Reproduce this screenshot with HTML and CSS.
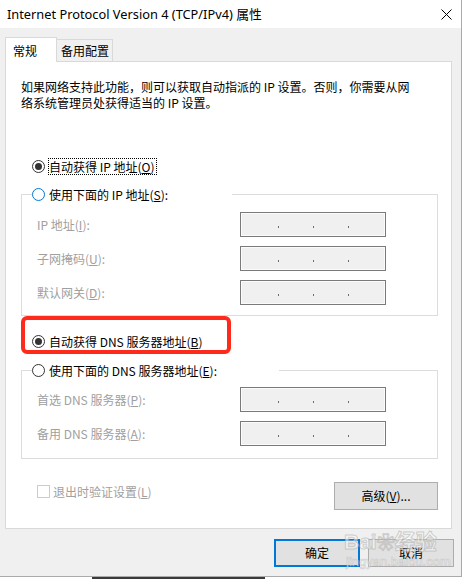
FILE: index.html
```html
<!DOCTYPE html>
<html lang="zh-CN">
<head>
<meta charset="utf-8">
<title>Internet Protocol Version 4 (TCP/IPv4) 属性</title>
<link rel="stylesheet" href="styles.css">
</head>
<body>
<div class="window">
  <div class="titlebar">
    <span class="title">Internet Protocol Version 4 (TCP/IPv4) 属性</span>
    <svg class="close" width="11" height="11" viewBox="0 0 11 11"><path d="M0.5 0.5L10.5 10.5M10.5 0.5L0.5 10.5" stroke="#000" stroke-width="1" fill="none"/></svg>
  </div>
  <div class="tabs">
    <div class="tab active">常规</div>
    <div class="tab">备用配置</div>
  </div>
  <div class="panel">
    <p class="intro">如果网络支持此功能，则可以获取自动指派的 IP 设置。否则，你需要从网<br>络系统管理员处获得适当的 IP 设置。</p>
    <div class="radio-row first"><span class="radio checked"></span><span class="focus">自动获得 IP 地址(<u>O</u>)</span></div>
    <fieldset class="group g1">
      <legend class="legend l1"><span class="radio hover"></span><span>使用下面的 IP 地址(<u>S</u>):</span></legend>
      <div class="field"><span class="flabel">IP 地址(<u>I</u>):</span><span class="ip"><i></i><i></i><i></i></span></div>
      <div class="field"><span class="flabel">子网掩码(<u>U</u>):</span><span class="ip"><i></i><i></i><i></i></span></div>
      <div class="field"><span class="flabel">默认网关(<u>D</u>):</span><span class="ip"><i></i><i></i><i></i></span></div>
    </fieldset>
    <div class="highlight">
      <div class="radio-row"><span class="radio checked"></span><span>自动获得 DNS 服务器地址(<u>B</u>)</span></div>
    </div>
    <fieldset class="group g2">
      <legend class="legend l2"><span class="radio"></span><span>使用下面的 DNS 服务器地址(<u>E</u>):</span></legend>
      <div class="field"><span class="flabel">首选 DNS 服务器(<u>P</u>):</span><span class="ip"><i></i><i></i><i></i></span></div>
      <div class="field"><span class="flabel">备用 DNS 服务器(<u>A</u>):</span><span class="ip"><i></i><i></i><i></i></span></div>
    </fieldset>
    <div class="bottom-row">
      <span class="check"><span class="box"></span>退出时验证设置(<u>L</u>)</span>
      <button class="btn adv">高级(<u>V</u>)...</button>
    </div>
  </div>
  <div class="actions">
    <button class="btn ok">确定</button>
    <button class="btn">取消</button>
  </div>
  <div class="watermark">
    <span class="wm-big">Bai<span class="paw">❀</span>经验</span>
    <span class="wm-small">jingyan.baidu.com</span>
  </div>
</div>
<div class="below"></div>
</body>
</html>
```
FILE: styles.css
```css
* { box-sizing: border-box; }
html, body { margin: 0; padding: 0; background: #fff; }
body {
  font-family: "Noto Sans CJK SC", "Noto Sans", sans-serif;
  font-size: 12px;
  color: #000;
}
u { text-decoration: underline; text-underline-offset: 1px; }

.window {
  position: relative;
  width: 462px;
  height: 577px;
  background: #f0f0f0;
  border-right: 1px solid #aaaaaa;
  border-bottom: 1px solid #aaaaaa;
}

.titlebar {
  height: 28px;
  background: #fff;
  display: flex;
  align-items: center;
  justify-content: space-between;
  padding: 0 9px 0 7px;
}
.title {
  font-family: "Noto Sans", "Noto Sans CJK SC", sans-serif;
  font-size: 12.8px;
  line-height: 16px;
}
.close { display: block; }

.tabs {
  height: 33px;
  display: flex;
  align-items: flex-end;
  padding-left: 5px;
}
.tab {
  height: 22px;
  width: 56px;
  border: 1px solid #d9d9d9;
  border-left: none;
  border-bottom: none;
  background: #f0f0f0;
  padding: 2px 0 0 4px;
  line-height: 18px;
}
.tab.active {
  position: relative;
  z-index: 1;
  width: 52px;
  height: 25px;
  margin-bottom: -1px;
  border-left: 1px solid #d9d9d9;
  background: #fff;
  padding: 4px 0 0 7px;
}

.panel {
  margin-left: 5px;
  width: 447px;
  height: 468px;
  border: 1px solid #d9d9d9;
  background: #fff;
  padding: 17px 13px 0 15px;
}
.intro {
  margin: 0;
  line-height: 16px;
  white-space: nowrap;
}

.radio-row {
  display: flex;
  align-items: center;
  height: 17px;
}
.radio-row.first {
  margin: 47px 0 0 11px;
}
.radio {
  width: 13px;
  height: 13px;
  border-radius: 50%;
  border: 1px solid #333;
  background: #fff;
  margin-right: 4px;
  flex: none;
  display: flex;
  align-items: center;
  justify-content: center;
}
.radio.checked::after {
  content: "";
  width: 7px;
  height: 7px;
  border-radius: 50%;
  background: #333;
}
.radio.hover { border-color: #0078d7; }
.focus {
  margin-left: -1px;
  border: 1px dotted #000;
  height: 17px;
  line-height: 15px;
  padding: 0 1px 0 0;
}

.group {
  margin: 11px 0 0;
  width: 417px;
  min-width: 0;
  border: 1px solid #dcdcdc;
  padding: 9px 0 10px 0;
}
.legend {
  margin-left: 10px;
  padding: 0;
  height: 17px;
  display: flex;
  align-items: center;
  background: #fff;
}
.l1 { width: 200px; }
.l2 { width: 247px; }
.g2 {
  margin-top: 8px;
  padding: 8px 0 12px 0;
}

.field {
  display: flex;
  align-items: center;
  height: 25px;
  padding-left: 15px;
}
.field + .field { margin-top: 9px; }
.flabel {
  width: 203px;
  color: #a0a0a0;
}
.ip {
  width: 146px;
  height: 25px;
  border: 1px solid #7a7a7a;
  background: #f0f0f0;
  box-shadow: inset 0 0 0 1px #fbfbfb;
  display: flex;
  align-items: flex-start;
  gap: 34px;
  padding: 13px 0 0 37px;
}
.ip i {
  width: 1px;
  height: 2px;
  background: #6c6c80;
}

.highlight {
  margin-left: 0;
  width: 210px;
  height: 38px;
  border: 4px solid #fe2b1c;
  border-radius: 6px;
  padding: 13px 0 0 7px;
}

.bottom-row {
  margin-top: 23px;
  display: flex;
  justify-content: space-between;
  align-items: flex-start;
}
.check {
  margin: 3px 0 0 16px;
  display: flex;
  align-items: center;
  height: 13px;
  color: #a0a0a0;
}
.box {
  width: 13px;
  height: 13px;
  border: 1px solid #cccccc;
  background: #fff;
  margin-right: 3px;
}

.btn {
  font-family: "Noto Sans CJK SC", "Noto Sans", sans-serif;
  font-size: 12px;
  color: #000;
  background: #e1e1e1;
  border: 1px solid #adadad;
  height: 28px;
  padding: 0;
  line-height: 16px;
}
.adv { width: 104px; }

.actions {
  margin-top: 10px;
  display: flex;
  justify-content: flex-end;
  gap: 8px;
  padding-right: 7px;
}
.actions .btn { width: 86px; }
.btn.ok { border: 2px solid #0078d7; }

.watermark {
  position: absolute;
  left: 344px;
  top: 530px;
  display: flex;
  flex-direction: column;
  align-items: flex-start;
  pointer-events: none;
}
.wm-big {
  font-family: "Liberation Sans", "Noto Sans CJK SC", sans-serif;
  font-size: 21px;
  font-weight: bold;
  line-height: 24px;
  color: rgba(255, 255, 255, 0.55);
  -webkit-text-stroke: 1px rgba(170, 170, 170, 0.55);
}
.paw { font-size: 18px; }
.wm-small {
  font-family: "Liberation Sans", sans-serif;
  font-size: 13px;
  line-height: 14px;
  margin-left: 2px;
  color: rgba(255, 255, 255, 0.6);
  -webkit-text-stroke: 0.6px rgba(170, 170, 170, 0.55);
}

.below {
  margin-left: 92px;
  width: 173px;
  height: 2px;
  background: #3a3a3a;
}
```
